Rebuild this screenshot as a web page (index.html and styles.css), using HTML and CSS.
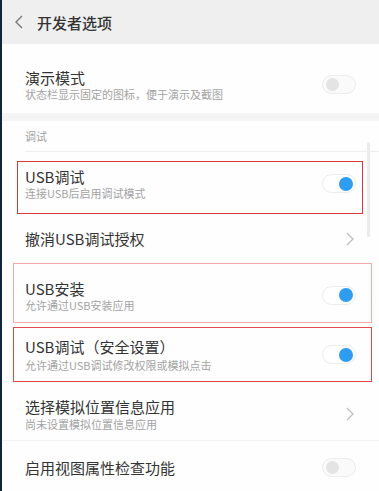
FILE: index.html
```html
<!DOCTYPE html>
<html>
<head lang="zh">
    <meta charset="UTF-8">
    <title>开发者选项</title>
    <link rel="stylesheet" href="styles.css">
</head>
<body>
<div class="screen">
    <div class="header">
        <svg class="back" width="10" height="14" viewBox="0 0 10 14"><path d="M8 1 L2 7 L8 13" fill="none" stroke="#777" stroke-width="1.4"/></svg>
        <span class="title">开发者选项</span>
    </div>

    <div class="row demo">
        <div class="text">
            <div class="name">演示模式</div>
            <div class="desc">状态栏显示固定的图标，便于演示及截图</div>
        </div>
        <div class="switch"><i></i></div>
    </div>
    <div class="gap"></div>

    <div class="section"><span>调试</span></div>

    <div class="box box1">
        <div class="row">
            <div class="text">
                <div class="name">USB调试</div>
                <div class="desc">连接USB后启用调试模式</div>
            </div>
            <div class="switch on"><i></i></div>
        </div>
    </div>

    <div class="row revoke">
        <div class="text">
            <div class="name">撤消USB调试授权</div>
        </div>
        <svg class="arrow" width="8" height="14" viewBox="0 0 8 14"><path d="M1 1 L7 7 L1 13" fill="none" stroke="#bbb" stroke-width="1.2"/></svg>
    </div>

    <div class="box box2">
        <div class="row">
            <div class="text">
                <div class="name">USB安装</div>
                <div class="desc">允许通过USB安装应用</div>
            </div>
            <div class="switch on"><i></i></div>
        </div>
    </div>

    <div class="box box3">
        <div class="row">
            <div class="text">
                <div class="name">USB调试（安全设置）</div>
                <div class="desc">允许通过USB调试修改权限或模拟点击</div>
            </div>
            <div class="switch on"><i></i></div>
        </div>
    </div>

    <div class="row mock">
        <div class="text">
            <div class="name">选择模拟位置信息应用</div>
            <div class="desc">尚未设置模拟位置信息应用</div>
        </div>
        <svg class="arrow" width="8" height="14" viewBox="0 0 8 14"><path d="M1 1 L7 7 L1 13" fill="none" stroke="#bbb" stroke-width="1.2"/></svg>
    </div>

    <div class="row inspect">
        <div class="text">
            <div class="name">启用视图属性检查功能</div>
        </div>
        <div class="switch"><i></i></div>
    </div>

    <div class="scroll"></div>
</div>
</body>
</html>
```

FILE: styles.css
```css
*{
    padding: 0;
    margin: 0;
    box-sizing: border-box;
}
body{
    width: 379px;
    height: 491px;
    overflow: hidden;
    background: #fff;
    font-family: "Noto Sans CJK SC", "Noto Sans", sans-serif;
}
.screen{
    height: 491px;
    border-left: 2px solid #13243a;
    background: #fefefe;
    position: relative;
}
.header{
    height: 44px;
    background: #efefef;
    display: flex;
    align-items: center;
    padding-left: 12px;
}
.back{
    margin-right: 13px;
}
.title{
    font-size: 15px;
    font-weight: 500;
    color: #333;
}
.row{
    display: flex;
    align-items: center;
    justify-content: space-between;
    padding: 0 23px;
}
.text{
    display: flex;
    flex-direction: column;
}
.name{
    font-size: 15px;
    color: #333;
    line-height: 19px;
}
.desc{
    font-size: 11px;
    color: #a3a3a3;
    line-height: 14px;
}
.demo{
    height: 69px;
    padding-top: 12px;
}
.gap{
    height: 8px;
    background: #f4f4f4;
}
.section{
    height: 31px;
    margin-left: 23px;
    border-bottom: 1px solid #efefef;
    display: flex;
    align-items: center;
    font-size: 11px;
    color: #a3a3a3;
}
.box{
    border: 1px solid #d8383b;
}
.box .row{
    height: 100%;
}
.box1{
    height: 53px;
    margin: 9px 16px 0 15px;
}
.box1 .row{
    padding: 0 6px 8px 7px;
}
.revoke{
    height: 49px;
}
.box2{
    height: 60px;
    margin: 0 7px 0 11px;
    border-color: #f1a9aa;
}
.box2 .row{
    padding: 4px 15px 0 11px;
}
.box3{
    height: 55px;
    margin: 4px 7px 0 11px;
    border-color: #e0484b;
}
.box3 .row{
    padding: 0 15px 0 11px;
}
.box3 .desc{
    margin-top: 2px;
}
.mock{
    height: 59px;
    padding-top: 6px;
    border-bottom: 1px solid #f3f3f3;
}
.mock .desc{
    margin-top: 1px;
}
.inspect{
    height: 53px;
}
.arrow{
    margin-right: 2px;
}
.switch{
    width: 34px;
    height: 19px;
    border-radius: 10px;
    border: 1px solid #ececec;
    background: #fafafa;
    position: relative;
    flex-shrink: 0;
}
.switch i{
    position: absolute;
    top: 2px;
    left: 3px;
    width: 13px;
    height: 13px;
    border-radius: 50%;
    background: #e4e4e4;
}
.switch.on{
    background: #fff;
}
.switch.on i{
    left: auto;
    right: 2px;
    width: 14px;
    height: 14px;
    top: 1.5px;
    background: #2e9cf0;
}
.scroll{
    position: absolute;
    top: 142px;
    left: 365px;
    width: 3px;
    height: 95px;
    border-radius: 2px;
    background: #ececec;
}
```
